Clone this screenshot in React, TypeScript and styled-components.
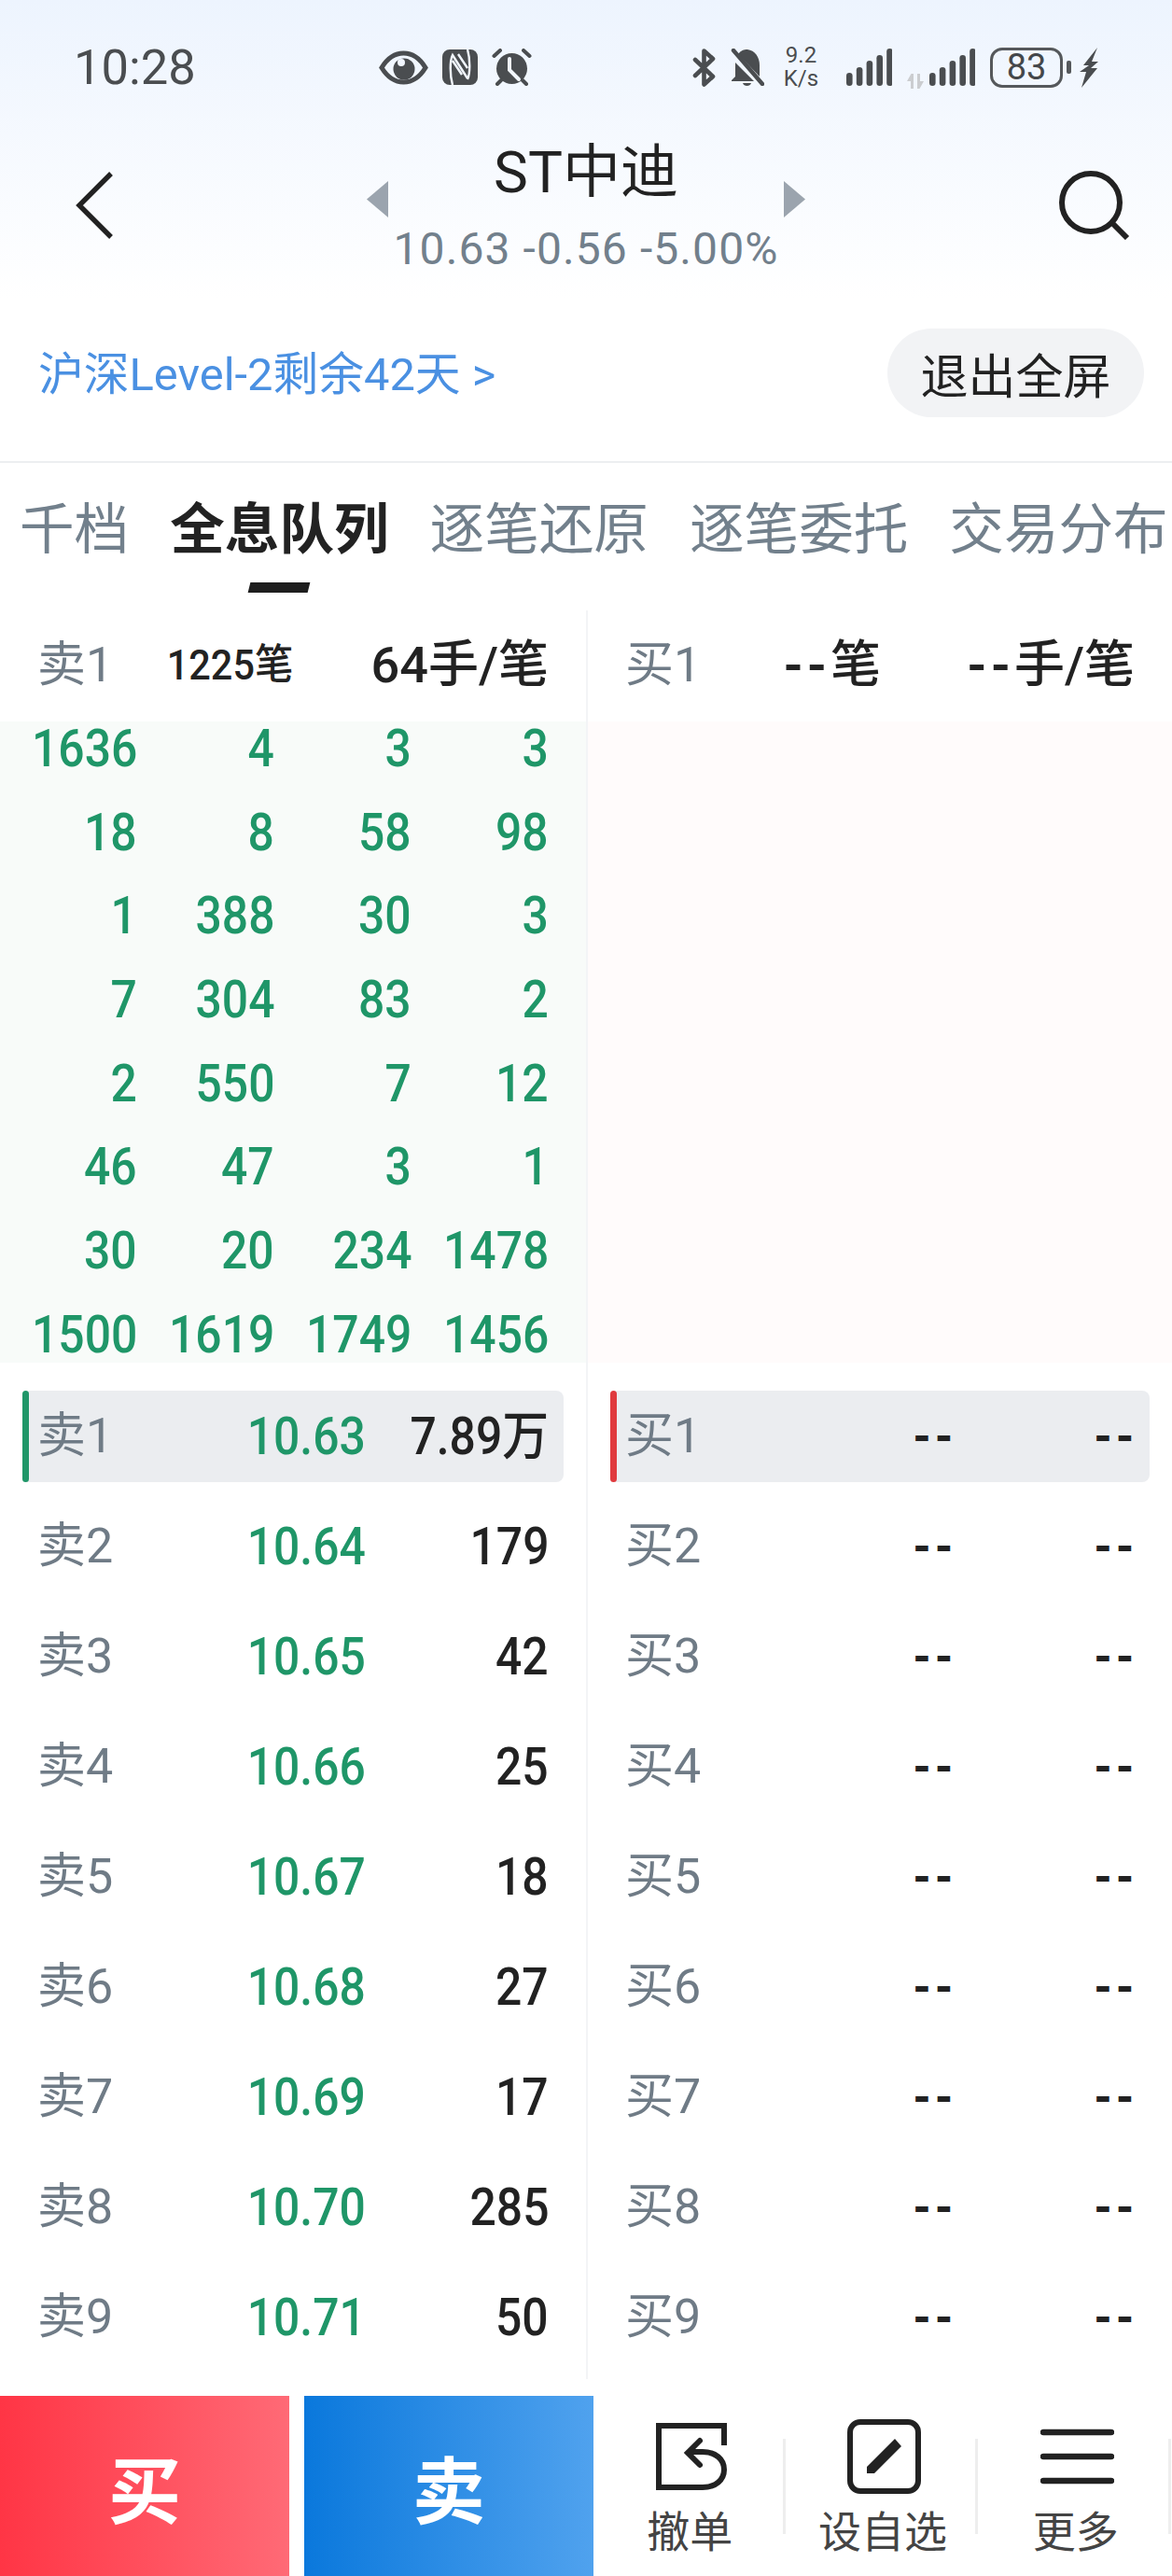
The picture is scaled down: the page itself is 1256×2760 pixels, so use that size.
import React from 'react';
import styled, { createGlobalStyle } from 'styled-components';

const GlobalStyle = createGlobalStyle`
  html, body {
    margin: 0;
    width: 1256px;
    height: 2760px;
    overflow: hidden;
    background: #fff;
  }
  body {
    font-family: Roboto, "Noto Sans CJK SC", sans-serif;
    color: #222;
  }
`;

const Page = styled.div`
  width: 1256px;
  height: 2760px;
  display: flex;
  flex-direction: column;
  overflow: hidden;
`;

const Header = styled.header`
  height: 494px;
  flex: none;
  border-bottom: 2px solid #eceef0;
  background: linear-gradient(#edf4fe, #fff 320px);
`;

const StatusBar = styled.div`
  height: 144px;
  display: flex;
  align-items: center;
  padding-left: 79px;
  color: #4a4d50;
`;

const Clock = styled.span`
  width: 127px;
  font-size: 52.5px;
  line-height: 60px;
  margin-right: 200px;
`;

const LeftIcons = styled.div`
  display: flex;
  align-items: center;
  gap: 15px;
  margin-right: 172px;
`;

const RightIcons = styled.div`
  display: flex;
  align-items: center;
  gap: 16px;
`;

const Speed = styled.div`
  width: 41px;
  margin: 0 11px 0 3px;
  text-align: center;
  font-size: 24px;
  line-height: 25px;
`;

const BatteryBox = styled.div`
  width: 78px;
  height: 43px;
  box-sizing: border-box;
  border: 3px solid #55585b;
  border-radius: 13px;
  display: flex;
  align-items: center;
  justify-content: center;
  font-size: 38px;
  color: #44474a;
`;

const BatteryCap = styled.div`
  width: 5px;
  height: 14px;
  margin-left: -12px;
  border-radius: 2px;
  background: #55585b;
`;

const Nav = styled.div`
  height: 150px;
  display: grid;
  grid-template-columns: 1fr auto 1fr;
  align-items: center;
  padding: 0 48px;
`;

const NavEnd = styled.div`
  justify-self: end;
  display: flex;
  margin-right: -3px;
`;

const NavStart = styled.div`
  display: flex;
  margin-left: 33px;
`;

const TitleWrap = styled.div`
  align-self: start;
  margin-top: 6px;
  display: flex;
  align-items: center;
  gap: 8px;
`;

const Arrow = styled.svg`
  margin-bottom: 19px;
`;

const TitleStack = styled.div`
  width: 408px;
  display: flex;
  flex-direction: column;
  align-items: center;
`;

const StockName = styled.div`
  font-size: 62px;
  line-height: 70px;
  margin-bottom: 19px;
`;

const StockQuote = styled.div`
  font-size: 48px;
  line-height: 56px;
  letter-spacing: 1.1px;
  color: #72808c;
  white-space: nowrap;
`;

const LevelRow = styled.div`
  height: 200px;
  box-sizing: border-box;
  padding: 58px 30px 47px 41px;
  display: flex;
  align-items: center;
  justify-content: space-between;
`;

const LevelLink = styled.span`
  font-size: 48.8px;
  margin-bottom: 6px;
  color: #4a90e2;
`;

const ExitButton = styled.div`
  width: 275px;
  height: 95px;
  border-radius: 48px;
  background: #f2f3f5;
  display: flex;
  align-items: center;
  justify-content: center;
  font-size: 51px;
`;

const TabBar = styled.nav`
  flex: none;
  display: flex;
  gap: 44px;
  padding: 43px 0 19px 21px;
  white-space: nowrap;
`;

const Tab = styled.div<{ $active?: boolean }>`
  display: flex;
  flex-direction: column;
  align-items: center;
  font-size: 58.6px;
  line-height: 58px;
  font-weight: ${(p) => (p.$active ? 700 : 400)};
  color: ${(p) => (p.$active ? '#222' : '#72808c')};
`;

const TabMark = styled.div<{ $active?: boolean }>`
  width: 64px;
  height: 11px;
  margin-top: 27px;
  background: ${(p) => (p.$active ? '#1e1e1e' : 'transparent')};
  transform: skewX(-14deg);
`;

const Book = styled.section`
  flex: none;
  height: 1892px;
  display: grid;
  grid-template-columns: 628px 2px 1fr;
`;

const Divider = styled.div`
  background: #f3f4f6;
`;

const Panel = styled.div`
  display: flex;
  flex-direction: column;
  min-width: 0;
`;

const PanelHead = styled.div<{ $right?: boolean }>`
  height: 119px;
  box-sizing: border-box;
  padding: 0 40px 2px 40px;
  display: grid;
  grid-template-columns: ${(p) => (p.$right ? '170px 104px 1fr' : '120px 154px 1fr')};
  align-items: center;
`;

const Label = styled.span`
  font-size: 52px;
  line-height: 60px;
  color: #6f7b86;
  white-space: nowrap;
`;

const Count = styled.span<{ $size: number; $scale: number }>`
  justify-self: end;
  display: inline-block;
  font-size: ${(p) => p.$size}px;
  font-weight: 500;
  line-height: 60px;
  color: #222;
  white-space: nowrap;
  transform: scaleX(${(p) => p.$scale});
  transform-origin: right center;
`;

const CountDash = styled.span`
  font-weight: 700;
  letter-spacing: 4px;
`;

const Queue = styled.div<{ $tone: 'ask' | 'bid' }>`
  height: 687px;
  box-sizing: border-box;
  padding: 3px 40px 0 0;
  display: grid;
  grid-template-columns: repeat(4, 1fr);
  grid-auto-rows: 52px;
  row-gap: 37.7px;
  background: ${(p) => (p.$tone === 'ask' ? '#f8fbf9' : '#fffbfb')};
`;

const Num = styled.span<{ $color?: string }>`
  justify-self: end;
  display: inline-block;
  font-size: 56px;
  font-weight: 500;
  line-height: 52px;
  white-space: nowrap;
  color: ${(p) => p.$color ?? '#222'};
  transform: scaleX(0.89);
  transform-origin: right center;
`;

const Levels = styled.div`
  padding: 30px 24px 17px;
  display: flex;
  flex-direction: column;
  gap: 20px;
`;

const Level = styled.div<{ $active?: boolean; $bar: string }>`
  position: relative;
  height: 98px;
  box-sizing: border-box;
  padding: 0 16px;
  display: grid;
  grid-template-columns: 172px 180px 1fr;
  align-items: center;
  border-radius: 8px;
  background: ${(p) => (p.$active ? '#ebedf0' : 'transparent')};

  &::before {
    content: '';
    display: ${(p) => (p.$active ? 'block' : 'none')};
    position: absolute;
    left: 0;
    top: 0;
    bottom: 0;
    width: 7px;
    border-radius: 4px;
    background: ${(p) => p.$bar};
  }
`;

const Dash = styled.span`
  justify-self: end;
  font-size: 46px;
  line-height: 52px;
  font-weight: 900;
  letter-spacing: 3px;
  margin-right: -3px;
  color: #222;
`;

const BottomBar = styled.footer`
  flex: none;
  height: 193px;
  margin-top: auto;
  display: flex;
`;

const TradeButton = styled.div<{ $from: string; $to: string }>`
  width: 310px;
  display: flex;
  align-items: center;
  justify-content: center;
  font-size: 78px;
  font-weight: 700;
  color: #fff;
  background: linear-gradient(90deg, ${(p) => p.$from}, ${(p) => p.$to});

  & + & {
    margin-left: 16px;
  }
`;

const Action = styled.div`
  position: relative;
  width: 206.7px;
  padding-top: 25px;
  box-sizing: border-box;
  display: flex;
  flex-direction: column;
  align-items: center;

  &::after {
    content: '';
    position: absolute;
    right: 1px;
    top: 46px;
    width: 3px;
    height: 102px;
    background: #eeeeee;
  }
`;

const ActionIcon = styled.div`
  height: 80px;
  margin-left: 3px;
  display: flex;
  align-items: center;
  justify-content: center;
`;

const ActionLabel = styled.div`
  margin-top: 19px;
  font-size: 46px;
  line-height: 45px;
  color: #444;
`;

const INK = '#4a4d50';

const Eye = () => (
  <svg width="53" height="37" viewBox="0 0 53 37">
    <path d="M3 18.5C10 7 18 3 26.5 3S43 7 50 18.5C43 30 35 34 26.5 34S10 30 3 18.5Z" fill="none" stroke={INK} strokeWidth="5" />
    <circle cx="27" cy="20" r="11.5" fill={INK} />
    <circle cx="24" cy="13" r="4" fill="#f1f6fe" />
  </svg>
);

const Nfc = () => (
  <svg width="38" height="38" viewBox="0 0 38 38">
    <rect width="38" height="38" rx="8" fill={INK} />
    <path d="M11 38C8 27 8 12 11 6L27 31M27 0C30 10 30 26 27 32M17 5L27 20M11 12L21 27" fill="none" stroke="#f1f6fe" strokeWidth="2.4" />
  </svg>
);

const Alarm = () => (
  <svg width="43" height="40" viewBox="0 0 43 40">
    <circle cx="21.5" cy="21.5" r="16.5" fill={INK} />
    <path d="M19 11V23L29 33" fill="none" stroke="#f1f6fe" strokeWidth="4" strokeLinecap="round" />
    <path d="M2.5 8L9 2M34 2L40.5 8M6 38L10 34M37 38L33 34" fill="none" stroke={INK} strokeWidth="4" strokeLinecap="round" />
  </svg>
);

const Bluetooth = () => (
  <svg width="25" height="41" viewBox="0 0 25 41">
    <path d="M3 12L22 30L12.5 38.5V2.5L22 11L3 29" fill="none" stroke={INK} strokeWidth="4.6" strokeLinejoin="round" strokeLinecap="round" />
  </svg>
);

const MutedBell = () => (
  <svg width="36" height="40" viewBox="0 0 36 40">
    <path d="M8 6C11 2 14 1 18 1C26 2 31 9 31 18V30Z" fill={INK} />
    <path d="M5 15V30L1 34V35H25Z" fill={INK} />
    <path d="M13 37H22C21 41 14 41 13 37Z" fill={INK} />
    <path d="M3 2L34 38" stroke={INK} strokeWidth="4.4" strokeLinecap="round" />
  </svg>
);

const Bars = () => (
  <svg width="50" height="40" viewBox="0 0 50 40">
    {[14, 20, 27, 33, 40].map((h, i) => (
      <rect key={i} x={1 + i * 10.8} y={40 - h} width="6.6" height={h} rx="3.3" fill={INK} />
    ))}
  </svg>
);

const Transfer = () => (
  <svg width="18" height="18" viewBox="0 0 18 18" style={{ alignSelf: 'flex-end', marginRight: -11 }}>
    <path d="M0 8L4.5 0H7V16H4V8ZM11 0H14V8H18L13.5 16H11Z" fill="#cbcdd0" />
  </svg>
);

const Bolt = () => (
  <svg width="20" height="43" viewBox="0 0 20 43" style={{ marginLeft: -7 }}>
    <path d="M19 0L4 19H10L0 26H7L2 43L19 22H12L20 15H13Z" fill={INK} />
  </svg>
);

const Back = () => (
  <svg width="42" height="74" viewBox="0 0 42 74">
    <path d="M38 3L4 37L38 71" fill="none" stroke="#222" strokeWidth="5.4" />
  </svg>
);

const Search = () => (
  <svg width="78" height="74" viewBox="0 0 78 74">
    <circle cx="36" cy="34" r="31" fill="none" stroke="#222" strokeWidth="6" />
    <path d="M59 56L75 72" stroke="#222" strokeWidth="6" />
  </svg>
);

const UndoIcon = () => (
  <svg width="76" height="72" viewBox="0 0 76 72">
    <path d="M73 24V3H3V69H50C64 69 73 61 73 50C73 39 64 31 50 31H35" fill="none" stroke="#222" strokeWidth="6" />
    <path d="M47 19L34 32L47 45" fill="none" stroke="#222" strokeWidth="6" strokeLinecap="round" />
  </svg>
);

const EditIcon = () => (
  <svg width="79" height="80" viewBox="0 0 79 80">
    <rect x="3" y="3" width="73" height="74" rx="11" fill="none" stroke="#222" strokeWidth="6" />
    <polygon points="21,51 21,58 29,58 58,29 51,21" fill="#222" />
  </svg>
);

const MenuIcon = () => (
  <svg width="79" height="60" viewBox="0 0 79 60">
    <path d="M3 4H76M3 30H76M3 56H76" stroke="#222" strokeWidth="6.4" strokeLinecap="round" />
  </svg>
);

const GREEN = '#1f9668';

const tabs = ['千档', '全息队列', '逐笔还原', '逐笔委托', '交易分布'];

const queue = [
  1636, 4, 3, 3,
  18, 8, 58, 98,
  1, 388, 30, 3,
  7, 304, 83, 2,
  2, 550, 7, 12,
  46, 47, 3, 1,
  30, 20, 234, 1478,
  1500, 1619, 1749, 1456,
];

const asks = [
  { price: '10.63', size: '7.89万' },
  { price: '10.64', size: '179' },
  { price: '10.65', size: '42' },
  { price: '10.66', size: '25' },
  { price: '10.67', size: '18' },
  { price: '10.68', size: '27' },
  { price: '10.69', size: '17' },
  { price: '10.70', size: '285' },
  { price: '10.71', size: '50' },
];

export default function App() {
  return (
    <Page>
      <GlobalStyle />
      <Header>
        <StatusBar>
          <Clock>10:28</Clock>
          <LeftIcons>
            <Eye />
            <Nfc />
            <Alarm />
          </LeftIcons>
          <RightIcons>
            <Bluetooth />
            <MutedBell />
            <Speed>
              9.2
              <br />
              K/s
            </Speed>
            <Bars />
            <Transfer />
            <Bars />
            <BatteryBox>83</BatteryBox>
            <BatteryCap />
            <Bolt />
          </RightIcons>
        </StatusBar>
        <Nav>
          <NavStart>
            <Back />
          </NavStart>
          <TitleWrap>
            <Arrow width="23" height="39" viewBox="0 0 23 39">
              <polygon points="23,0 23,39 0,19.5" fill="#9ba4ae" />
            </Arrow>
            <TitleStack>
              <StockName>ST中迪</StockName>
              <StockQuote>10.63 -0.56 -5.00%</StockQuote>
            </TitleStack>
            <Arrow width="23" height="39" viewBox="0 0 23 39">
              <polygon points="0,0 0,39 23,19.5" fill="#9ba4ae" />
            </Arrow>
          </TitleWrap>
          <NavEnd>
            <Search />
          </NavEnd>
        </Nav>
        <LevelRow>
          <LevelLink>沪深Level-2剩余42天 &gt;</LevelLink>
          <ExitButton>退出全屏</ExitButton>
        </LevelRow>
      </Header>

      <TabBar>
        {tabs.map((t, i) => (
          <Tab key={t} $active={i === 1}>
            {t}
            <TabMark $active={i === 1} />
          </Tab>
        ))}
      </TabBar>

      <Book>
        <Panel>
          <PanelHead>
            <Label>卖1</Label>
            <Count $size={45} $scale={0.92}>1225笔</Count>
            <Count $size={54} $scale={1}>64手/笔</Count>
          </PanelHead>
          <Queue $tone="ask">
            {queue.map((n, i) => (
              <Num key={i} $color={GREEN}>{n}</Num>
            ))}
          </Queue>
          <Levels>
            {asks.map((a, i) => (
              <Level key={a.price} $active={i === 0} $bar={GREEN}>
                <Label>卖{i + 1}</Label>
                <Num $color={GREEN}>{a.price}</Num>
                <Num>{a.size}</Num>
              </Level>
            ))}
          </Levels>
        </Panel>
        <Divider />
        <Panel>
          <PanelHead $right>
            <Label>买1</Label>
            <Count $size={54} $scale={1}><CountDash>--</CountDash>笔</Count>
            <Count $size={54} $scale={1}><CountDash>--</CountDash>手/笔</Count>
          </PanelHead>
          <Queue $tone="bid" />
          <Levels>
            {asks.map((a, i) => (
              <Level key={a.price} $active={i === 0} $bar="#e03a3e">
                <Label>买{i + 1}</Label>
                <Dash>--</Dash>
                <Dash>--</Dash>
              </Level>
            ))}
          </Levels>
        </Panel>
      </Book>

      <BottomBar>
        <TradeButton $from="#ff3545" $to="#ff6a76">买</TradeButton>
        <TradeButton $from="#0a78dc" $to="#50a2ee">卖</TradeButton>
        <Action>
          <ActionIcon><UndoIcon /></ActionIcon>
          <ActionLabel>撤单</ActionLabel>
        </Action>
        <Action>
          <ActionIcon><EditIcon /></ActionIcon>
          <ActionLabel>设自选</ActionLabel>
        </Action>
        <Action>
          <ActionIcon><MenuIcon /></ActionIcon>
          <ActionLabel>更多</ActionLabel>
        </Action>
      </BottomBar>
    </Page>
  );
}
